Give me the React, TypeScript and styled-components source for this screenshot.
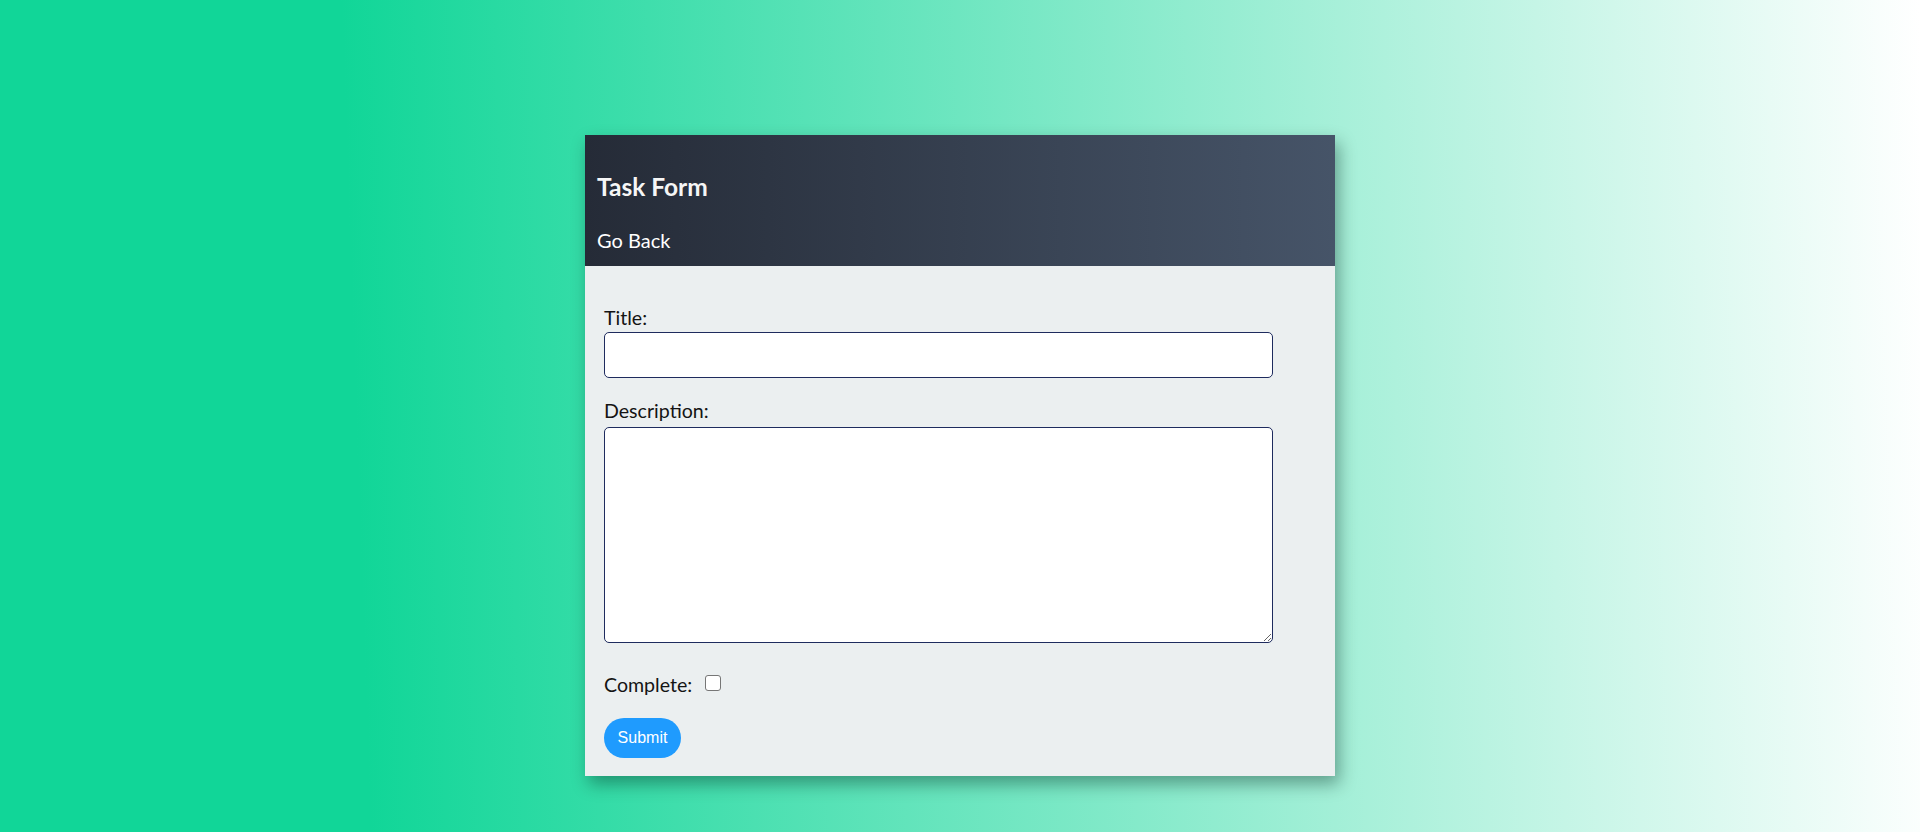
import React from "react";
import styled, { createGlobalStyle } from "styled-components";

const GlobalStyle = createGlobalStyle`
  html, body {
    margin: 0;
    padding: 0;
  }
  body {
    min-height: 100vh;
    background: linear-gradient(88deg, #11d698 0%, #11d698 19%, #ffffff 100%);
    font-family: Lato, "Noto Sans", sans-serif;
  }
`;

const Page = styled.div`
  min-height: 100vh;
  box-sizing: border-box;
  display: flex;
  flex-direction: column;
  align-items: center;
  padding-top: 135px;
`;

const Card = styled.div`
  width: 750px;
  background: #ebeff0;
  box-shadow: 4px 8px 16px rgba(0, 40, 30, 0.4);
  display: flex;
  flex-direction: column;
`;

const Header = styled.header`
  background: linear-gradient(to right, #252b37, #465468);
  padding: 36px 12px 14px;
  display: flex;
  flex-direction: column;
`;

const Title = styled.h2`
  margin: 0;
  font-size: 24.5px;
  line-height: 32px;
  font-weight: 700;
  color: #f6f6f6;
`;

const BackLink = styled.a`
  margin-top: 25px;
  font-size: 20px;
  line-height: 24px;
  color: #ffffff;
  text-decoration: none;
  cursor: pointer;
`;

const Form = styled.form`
  padding: 40px 19px 18px;
  display: flex;
  flex-direction: column;
  align-items: flex-start;
`;

const Field = styled.div<{ $gap?: number }>`
  display: flex;
  flex-direction: column;
  margin-bottom: ${(p) => p.$gap ?? 21}px;
`;

const Label = styled.label<{ $gap?: number }>`
  font-size: 19.6px;
  line-height: 23px;
  color: #141414;
  margin-bottom: ${(p) => p.$gap ?? 3}px;
`;

const TextInput = styled.input`
  width: 669px;
  height: 46px;
  box-sizing: border-box;
  border: 1px solid #1e2b5e;
  border-radius: 5px;
  background: #ffffff;
  font-size: 18px;
  padding: 0 10px;
  outline: none;
`;

const TextArea = styled.textarea`
  display: block;
  width: 669px;
  height: 216px;
  box-sizing: border-box;
  border: 1px solid #1e2b5e;
  border-radius: 5px;
  background: #ffffff;
  font-size: 18px;
  padding: 8px 10px;
  outline: none;
  margin: 0;
`;

const CheckRow = styled.div`
  display: flex;
  align-items: center;
  gap: 13px;
  margin-bottom: 22px;
  margin-top: 9px;
`;

const CheckBox = styled.input`
  width: 16px;
  height: 16px;
  margin: 0 0 3px;
  border: 1px solid #767676;
  border-radius: 3px;
  appearance: none;
  background: #ffffff;
`;

const SubmitButton = styled.button`
  width: 77px;
  height: 40px;
  border: none;
  border-radius: 20px;
  background: #1f9bfe;
  color: #ffffff;
  font-family: "Liberation Sans", Arial, sans-serif;
  font-size: 16px;
  cursor: pointer;
  padding: 0;
`;

export default function App() {
  return (
    <>
      <GlobalStyle />
      <Page>
        <Card>
          <Header>
            <Title>Task Form</Title>
            <BackLink>Go Back</BackLink>
          </Header>
          <Form onSubmit={(e) => e.preventDefault()}>
            <Field>
              <Label htmlFor="title">Title:</Label>
              <TextInput id="title" type="text" />
            </Field>
            <Field $gap={21}>
              <Label htmlFor="description" $gap={5}>
                Description:
              </Label>
              <TextArea id="description" />
            </Field>
            <CheckRow>
              <Label htmlFor="complete" $gap={0}>
                Complete:
              </Label>
              <CheckBox id="complete" type="checkbox" />
            </CheckRow>
            <SubmitButton type="submit">Submit</SubmitButton>
          </Form>
        </Card>
      </Page>
    </>
  );
}
